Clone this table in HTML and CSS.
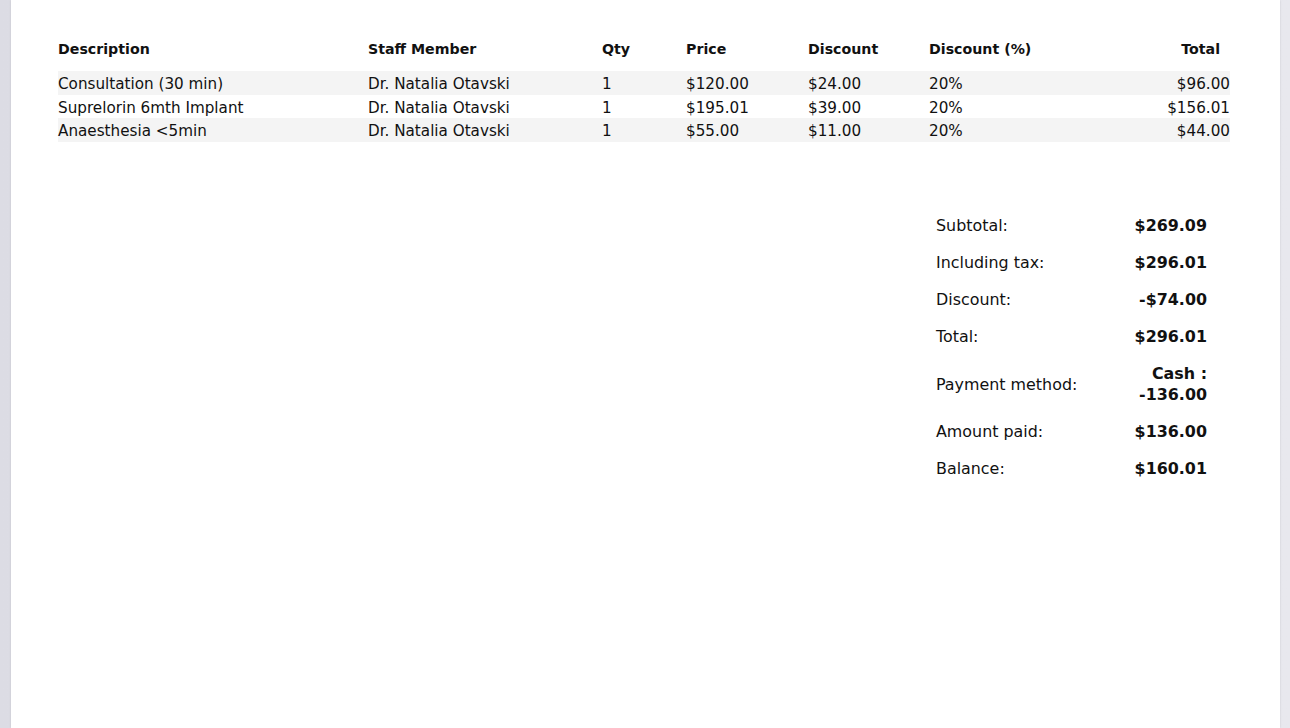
FILE: index.html
```html
<!DOCTYPE html>
<html lang="en">
<head>
    <meta charset="UTF-8">
    <meta name="viewport" content="width=device-width, initial-scale=1.0">
    <title>Invoice</title>
    <link rel="stylesheet" href="styles.css">
</head>
<body>

    <div class="page">

        <!-- Itens da fatura -->
        <table class="items">
            <thead>
                <tr>
                    <th class="col-desc">Description</th>
                    <th class="col-staff">Staff Member</th>
                    <th class="col-qty">Qty</th>
                    <th class="col-price">Price</th>
                    <th class="col-disc">Discount</th>
                    <th class="col-pct">Discount (%)</th>
                    <th class="col-total">Total</th>
                </tr>
            </thead>
            <tbody>
                <tr>
                    <td>Consultation (30 min)</td>
                    <td>Dr. Natalia Otavski</td>
                    <td>1</td>
                    <td>$120.00</td>
                    <td>$24.00</td>
                    <td>20%</td>
                    <td class="col-total">$96.00</td>
                </tr>
                <tr>
                    <td>Suprelorin 6mth Implant</td>
                    <td>Dr. Natalia Otavski</td>
                    <td>1</td>
                    <td>$195.01</td>
                    <td>$39.00</td>
                    <td>20%</td>
                    <td class="col-total">$156.01</td>
                </tr>
                <tr>
                    <td>Anaesthesia &lt;5min</td>
                    <td>Dr. Natalia Otavski</td>
                    <td>1</td>
                    <td>$55.00</td>
                    <td>$11.00</td>
                    <td>20%</td>
                    <td class="col-total">$44.00</td>
                </tr>
            </tbody>
        </table>

        <!-- Resumo -->
        <div class="summary">
            <table>
                <tr><td>Subtotal:</td><th>$269.09</th></tr>
                <tr><td>Including tax:</td><th>$296.01</th></tr>
                <tr><td>Discount:</td><th>-$74.00</th></tr>
                <tr><td>Total:</td><th>$296.01</th></tr>
                <tr><td>Payment method:</td><th>Cash :<br>-136.00</th></tr>
                <tr><td>Amount paid:</td><th>$136.00</th></tr>
                <tr><td>Balance:</td><th>$160.01</th></tr>
            </table>
        </div>

    </div>

</body>
</html>
```

FILE: styles.css
```css
/* Fundo cinza em volta da folha */
body {
    margin: 0;
    background: linear-gradient(to right, #dcdce4, #e8e8ee);
    font-family: "DejaVu Sans", Verdana, sans-serif;
    color: #111;
}

.page {
    background-color: white;
    margin: 0 10px 0 11px;
    min-height: 728px;
    padding: 41px 50px 0 47px;
    box-sizing: border-box;
    box-shadow: 0 0 2px rgba(0, 0, 0, 0.12);
}

/* Tabela de itens */
.items {
    width: 100%;
    border-collapse: collapse;
}

.items th {
    font-size: 14.2px;
    font-weight: bold;
    text-align: left;
    padding: 0 0 14px 0;
    height: 26px;
    box-sizing: border-box;
}

.items td {
    font-size: 15.2px;
    padding: 2px 0 0 0;
    height: 23.7px;
    line-height: 18px;
    box-sizing: border-box;
}

.items tbody tr:nth-child(odd) td {
    background-color: #f4f4f4;
}

.items .col-desc { width: 310px; }
.items .col-staff { width: 234px; }
.items .col-qty { width: 84px; }
.items .col-price { width: 122px; }
.items .col-disc { width: 121px; }

.items .col-total {
    text-align: right;
}

.items th.col-total {
    padding-right: 10px;
}

/* Resumo dos valores */
.summary {
    display: flex;
    justify-content: flex-end;
    padding: 73px 23px 0 0;
}

.summary table {
    border-collapse: collapse;
    width: 271px;
}

.summary td, .summary th {
    font-size: 15.9px;
    padding: 0 0 16px 0;
    line-height: 21px;
    vertical-align: middle;
}

.summary td {
    text-align: left;
    font-weight: normal;
}

.summary th {
    text-align: right;
    font-weight: bold;
}
```
